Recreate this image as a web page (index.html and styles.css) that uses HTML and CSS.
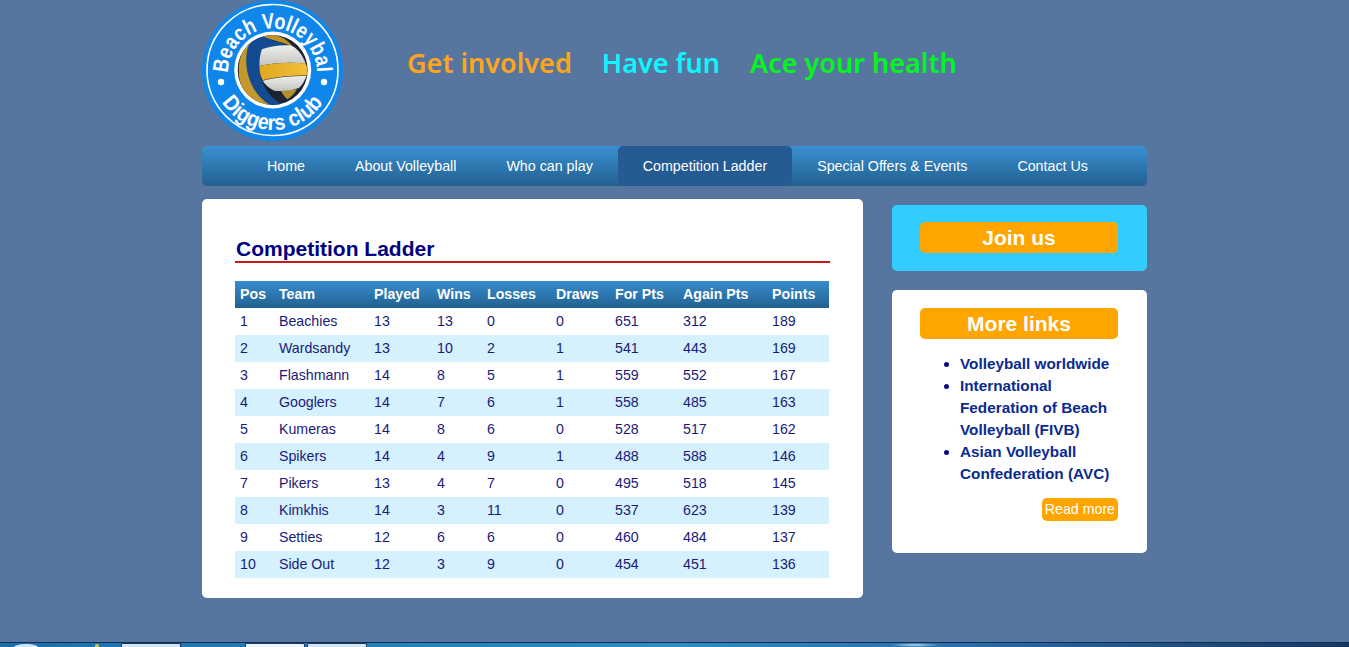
FILE: index.html
```html
<!DOCTYPE html>
<html lang="en">
<head>
<meta charset="utf-8">
<title>Competition Ladder</title>
<link rel="stylesheet" href="styles.css">
</head>
<body>
<div class="wrap">
  <header class="top">
    <svg class="logo" width="142" height="142" viewBox="0 1 142 142" role="img" aria-label="Beach Volleyball Diggers club">
      <defs>
        <path id="arcTop" d="M26 74 A44.5 44.5 0 1 1 115 74"/>
        <path id="arcBot" d="M10.5 71 A60 60 0 0 0 130.5 71"/>
        <clipPath id="ballClip"><circle cx="125" cy="120" r="105"/></clipPath>
        <linearGradient id="panel" x1="0" y1="0" x2="0" y2="1">
          <stop offset="0" stop-color="#eeeeea"/>
          <stop offset="1" stop-color="#c4c4c2"/>
        </linearGradient>
        <linearGradient id="panelGold" x1="0" y1="0" x2="1" y2="0">
          <stop offset="0" stop-color="#e0a820"/>
          <stop offset="1" stop-color="#f0c038"/>
        </linearGradient>
      </defs>
      <circle cx="70.5" cy="71.5" r="70.5" fill="#0f86ea"/>
      <circle cx="70.5" cy="71" r="65.5" fill="none" stroke="#fff" stroke-width="1.6"/>
      <circle cx="70.7" cy="71" r="38.5" fill="#fff"/>
      <g transform="translate(29 31) scale(.3333)">
        <circle cx="125" cy="120" r="105" fill="#1b2430"/>
        <g clip-path="url(#ballClip)">
          <path d="M60 30 C25 60 15 120 30 165 C45 200 80 225 130 230 C85 190 50 110 60 30Z" fill="#c4982c"/>
          <path d="M95 14 C125 8 165 20 185 50 C160 38 125 32 100 22Z" fill="#bc9128"/>
          <path d="M60 30 C72 18 90 14 100 20 C130 34 150 40 175 46 C120 50 88 70 85 105 C85 150 105 195 150 222 L130 232 C90 215 60 175 50 130 C42 95 45 55 60 30Z" fill="#134a92"/>
          <path d="M150 182 C155 192 160 200 170 208 C180 200 190 192 198 178Z" fill="#b3902c"/>
          <path d="M93 58 C120 48 150 44 178 46 C198 52 215 75 224 100 C175 96 130 98 85 108 C85 88 88 70 93 58Z" fill="url(#panel)"/>
          <path d="M85 108 C130 98 175 96 224 100 C230 115 230 125 227 136 C180 137 135 140 95 151 C88 138 85 122 85 108Z" fill="url(#panelGold)"/>
          <path d="M95 152 C135 141 180 138 227 137 C222 150 214 165 204 174 C180 182 155 184 130 182 C115 175 103 165 95 152Z" fill="url(#panel)"/>
        </g>
      </g>
      <text class="logo-text"><textPath href="#arcTop" startOffset="0" textLength="144" lengthAdjust="spacingAndGlyphs">Beach Volleyball</textPath></text>
      <text class="logo-text"><textPath href="#arcBot" startOffset="50%" text-anchor="middle" textLength="120" lengthAdjust="spacingAndGlyphs">Diggers club</textPath></text>
      <circle cx="19" cy="83" r="3.2" fill="#fff"/>
      <circle cx="122" cy="83" r="3.2" fill="#fff"/>
    </svg>
    <div class="tagline">
      <span class="tag-orange">Get involved</span>
      <span class="tag-cyan">Have fun</span>
      <span class="tag-green">Ace your health</span>
    </div>
  </header>

  <nav class="nav">
    <a class="nav-item">Home</a>
    <a class="nav-item">About Volleyball</a>
    <a class="nav-item">Who can play</a>
    <a class="nav-item active">Competition Ladder</a>
    <a class="nav-item">Special Offers &amp; Events</a>
    <a class="nav-item">Contact Us</a>
  </nav>

  <div class="columns">
    <main class="card">
      <h1 class="title">Competition Ladder</h1>
      <table class="ladder">
        <thead>
          <tr><th class="c1">Pos</th><th class="c2">Team</th><th class="c3">Played</th><th class="c4">Wins</th><th class="c5">Losses</th><th class="c6">Draws</th><th class="c7">For Pts</th><th class="c8">Again Pts</th><th class="c9">Points</th></tr>
        </thead>
        <tbody>
          <tr><td>1</td><td>Beachies</td><td>13</td><td>13</td><td>0</td><td>0</td><td>651</td><td>312</td><td>189</td></tr>
          <tr><td>2</td><td>Wardsandy</td><td>13</td><td>10</td><td>2</td><td>1</td><td>541</td><td>443</td><td>169</td></tr>
          <tr><td>3</td><td>Flashmann</td><td>14</td><td>8</td><td>5</td><td>1</td><td>559</td><td>552</td><td>167</td></tr>
          <tr><td>4</td><td>Googlers</td><td>14</td><td>7</td><td>6</td><td>1</td><td>558</td><td>485</td><td>163</td></tr>
          <tr><td>5</td><td>Kumeras</td><td>14</td><td>8</td><td>6</td><td>0</td><td>528</td><td>517</td><td>162</td></tr>
          <tr><td>6</td><td>Spikers</td><td>14</td><td>4</td><td>9</td><td>1</td><td>488</td><td>588</td><td>146</td></tr>
          <tr><td>7</td><td>Pikers</td><td>13</td><td>4</td><td>7</td><td>0</td><td>495</td><td>518</td><td>145</td></tr>
          <tr><td>8</td><td>Kimkhis</td><td>14</td><td>3</td><td>11</td><td>0</td><td>537</td><td>623</td><td>139</td></tr>
          <tr><td>9</td><td>Setties</td><td>12</td><td>6</td><td>6</td><td>0</td><td>460</td><td>484</td><td>137</td></tr>
          <tr><td>10</td><td>Side Out</td><td>12</td><td>3</td><td>9</td><td>0</td><td>454</td><td>451</td><td>136</td></tr>
        </tbody>
      </table>
    </main>

    <aside class="side">
      <section class="box box-join">
        <div class="pill">Join us</div>
      </section>
      <section class="box box-links">
        <div class="pill">More links</div>
        <ul class="links">
          <li>Volleyball worldwide</li>
          <li>International Federation of Beach Volleyball (FIVB)</li>
          <li>Asian Volleyball Confederation (AVC)</li>
        </ul>
        <div class="more-row"><a class="more">Read more</a></div>
      </section>
    </aside>
  </div>
</div>

<div class="taskbar">
  <span class="start"></span>
  <span class="tray-dot"></span>
  <span class="task task-a"></span>
  <span class="task task-b"></span>
  <span class="task task-c"></span>
  <span class="glow"></span>
</div>
</body>
</html>
```
FILE: styles.css
```css
html, body { margin: 0; padding: 0; height: 647px; overflow: hidden; }
body { background: #56769f; font-family: "Liberation Sans", Arial, sans-serif; position: relative; }
.wrap { width: 945px; margin-left: 202px; }

.top { height: 146px; display: flex; }
.logo { display: block; flex: none; }
.logo-text { font-family: "Liberation Sans", sans-serif; font-weight: 700; font-size: 22px; fill: #fff; }
.tagline { margin-left: 63px; padding-top: 44px; font-family: "Noto Sans", sans-serif; font-weight: 600; font-size: 27px; line-height: 38px; display: flex; gap: 30px; white-space: nowrap; }
.tag-orange { color: #ffa51c; }
.tag-cyan { color: #0ff5ff; }
.tag-green { color: #05f51f; }

.nav { height: 40px; display: flex; padding-left: 40px; border-radius: 5px; background: linear-gradient(#3a90d2, #22608f); }
.nav-item { padding: 0 25px; line-height: 40px; font-size: 14.25px; color: #fff; border-radius: 5px; white-space: nowrap; }
.nav-item.active { background: #265a92; }

.columns { display: flex; align-items: flex-start; margin-top: 13px; }
.card { width: 661px; height: 399px; box-sizing: border-box; padding: 39px 33px 0; background: #fff; border-radius: 5px; }
.title { margin: 0 0 18px; padding-left: 1px; height: 23px; font-size: 21px; line-height: 22px; font-weight: 700; color: #000080; border-bottom: 2px solid #c8171c; }
.ladder { width: 594px; border-collapse: collapse; table-layout: fixed; font-size: 14.2px; }
.ladder th { height: 27px; box-sizing: border-box; padding: 0 0 2px 5px; text-align: left; color: #fff; font-weight: 700; background: linear-gradient(#378dcf, #22618f); }
.ladder td { height: 27px; box-sizing: border-box; padding: 0 0 2px 5px; color: #1b1a78; }
.ladder tbody tr:nth-child(even) td { background: #d4f1fd; }
.c1 { width: 39px; } .c2 { width: 95px; } .c3 { width: 63px; } .c4 { width: 50px; } .c5 { width: 69px; }
.c6 { width: 59px; } .c7 { width: 68px; } .c8 { width: 89px; } .c9 { width: 62px; }

.side { width: 255px; margin-left: 29px; padding-top: 6px; display: flex; flex-direction: column; gap: 19px; }
.box { border-radius: 5px; box-sizing: border-box; padding-left: 28px; padding-right: 29px; }
.box-join { height: 66px; padding-top: 17px; background: #33ccff; }
.box-links { height: 263px; padding-top: 18px; background: #fff; }
.pill { height: 31px; line-height: 32px; border-radius: 5px; background: #ffa500; color: #fff; font-size: 21px; font-weight: 700; text-align: center; }
.links { margin: 14px 0 0; padding: 0 0 0 40px; list-style: disc; font-size: 15.3px; font-weight: 700; line-height: 22px; }
.links li { color: #0a2a90; }
.links li::marker { color: #0b0b80; }
.more-row { display: flex; justify-content: flex-end; margin-top: 13px; }
.more { height: 23px; line-height: 22px; padding: 0 3px; font-size: 14.2px; color: #fff; background: #ffa500; border-radius: 5px; }

.taskbar { position: absolute; left: 0; right: 0; bottom: 0; height: 5px; border-top: 1px solid #0d2f55; box-sizing: border-box; background: linear-gradient(90deg, #1e6ea8 0%, #2f8cc4 50%, #2a70ac 70%, #1f4a78 90%, #17375f 100%); overflow: hidden; }
.task { position: absolute; top: 0; height: 4px; width: 60px; border: 1px solid #1a3a5c; border-bottom: 0; box-sizing: border-box; border-radius: 2px 2px 0 0; }
.task-a { left: 121px; background: #d5e6f2; }
.task-b { left: 245px; background: #eef5fa; }
.task-c { left: 307px; background: #d5e6f2; }
.start { position: absolute; left: 14px; top: 1px; width: 24px; height: 3px; background: #d8e6ef; border-radius: 12px 12px 0 0 / 3px 3px 0 0; }
.tray-dot { position: absolute; left: 95px; top: 1px; width: 4px; height: 3px; background: #d8c84a; border-radius: 2px 2px 0 0; }
.glow { position: absolute; left: 890px; top: 0; width: 50px; height: 4px; background: radial-gradient(ellipse at center, #b5d8f0, transparent 70%); }
```
